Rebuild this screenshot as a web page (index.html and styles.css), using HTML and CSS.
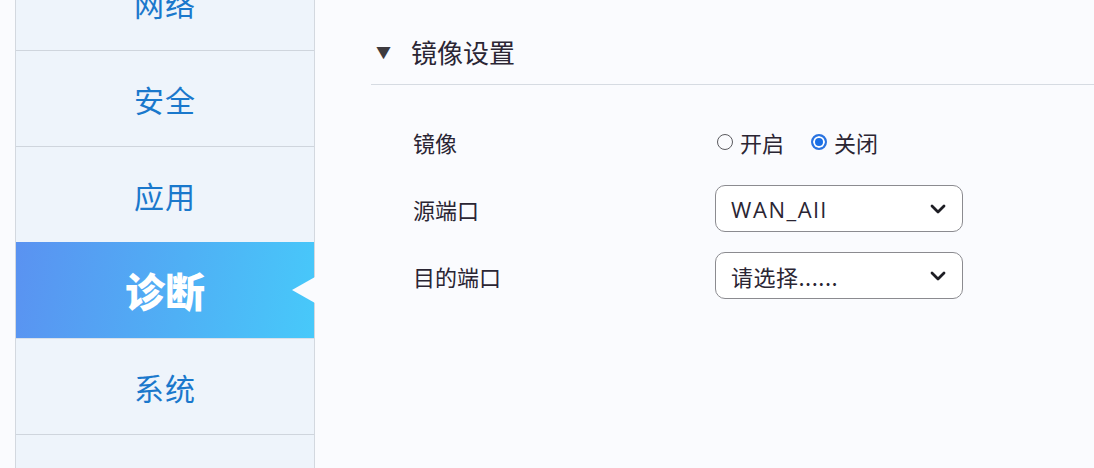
FILE: index.html
```html
<!DOCTYPE html>
<html lang="zh">
<head>
<meta charset="utf-8">
<link rel="stylesheet" href="styles.css">
</head>
<body>
<div class="page">
  <nav class="sidebar">
    <div class="nav-item first">网络</div>
    <div class="nav-item">安全</div>
    <div class="nav-item">应用</div>
    <div class="nav-item active">诊断<span class="pointer"></span></div>
    <div class="nav-item">系统</div>
    <div class="nav-item"></div>
  </nav>
  <main class="content">
    <div class="section-head">
      <span class="caret">▼</span>
      <span class="section-title">镜像设置</span>
    </div>
    <div class="form">
      <div class="row">
        <div class="label">镜像</div>
        <div class="control radios">
          <label class="radio"><span class="dot"></span>开启</label>
          <label class="radio checked"><span class="dot"></span>关闭</label>
        </div>
      </div>
      <div class="row">
        <div class="label">源端口</div>
        <div class="control">
          <div class="select"><span class="value latin">WAN_All</span>
            <svg class="chev" viewBox="0 0 16 10" width="16" height="10"><path d="M2 2 L8 8 L14 2" fill="none" stroke="#1e1e24" stroke-width="2.8" stroke-linecap="round" stroke-linejoin="round"/></svg>
          </div>
        </div>
      </div>
      <div class="row">
        <div class="label">目的端口</div>
        <div class="control">
          <div class="select"><span class="value">请选择......</span>
            <svg class="chev" viewBox="0 0 16 10" width="16" height="10"><path d="M2 2 L8 8 L14 2" fill="none" stroke="#1e1e24" stroke-width="2.8" stroke-linecap="round" stroke-linejoin="round"/></svg>
          </div>
        </div>
      </div>
    </div>
  </main>
</div>
</body>
</html>
```
FILE: styles.css
```css
html, body {
  margin: 0;
  padding: 0;
}
body {
  background: #fafbfe;
  font-family: "Noto Sans CJK SC", "Noto Sans", sans-serif;
  color: #2a2533;
  width: 1094px;
  height: 468px;
  overflow: hidden;
}
.page {
  display: flex;
  height: 468px;
  overflow: hidden;
}
.sidebar {
  margin-left: 15px;
  width: 298px;
  border-left: 1px solid #d3d8df;
  border-right: 1px solid #d3d8df;
  background: #eef4fb;
  display: flex;
  flex-direction: column;
  flex-shrink: 0;
}
.nav-item {
  position: relative;
  height: 95px;
  flex-shrink: 0;
  border-bottom: 1px solid #cfd5dd;
  display: flex;
  align-items: center;
  justify-content: center;
  font-size: 30px;
  color: #1a78cc;
  letter-spacing: 1px;
}
.nav-item.first {
  margin-top: -45px;
}
.nav-item.active {
  background: linear-gradient(100deg, #5a92f1 0%, #4fb0f5 55%, #47c9fa 100%);
  color: #ffffff;
  font-weight: 900;
  font-size: 40px;
  letter-spacing: 0;
  border-bottom-color: #d8e0ea;
  margin-top: -1px;
  height: 96px;
}
.pointer {
  position: absolute;
  right: -1px;
  top: 50%;
  margin-top: -13px;
  width: 0;
  height: 0;
  border-top: 13px solid transparent;
  border-bottom: 13px solid transparent;
  border-right: 23px solid #fafbfe;
}
.content {
  flex: 1;
  margin-left: 56px;
  display: flex;
  flex-direction: column;
}
.section-head {
  height: 85px;
  box-sizing: border-box;
  padding-top: 30px;
  padding-left: 5px;
  display: flex;
  align-items: flex-start;
  border-bottom: 1px solid #d6dbe2;
}
.caret {
  font-size: 15px;
  color: #3d3a3e;
  width: 35px;
  line-height: 44px;
}
.section-title {
  font-size: 26px;
  line-height: 44px;
  color: #2b2634;
}
.form {
  padding-top: 24px;
  display: flex;
  flex-direction: column;
}
.row {
  display: flex;
  align-items: center;
  height: 66px;
}
.row + .row {
  height: 67px;
}
.label {
  width: 344px;
  padding-left: 42px;
  box-sizing: border-box;
  font-size: 22px;
  color: #2a2533;
}
.control {
  display: flex;
  align-items: center;
}
.radios {
  gap: 27px;
  padding-left: 2px;
}
.radio {
  display: flex;
  align-items: center;
  gap: 7px;
  font-size: 22px;
}
.dot {
  width: 14px;
  height: 14px;
  border: 1px solid #5a5a5f;
  border-radius: 50%;
  box-sizing: content-box;
}
.radio.checked .dot {
  border: 2px solid #2a73e0;
  width: 12px;
  height: 12px;
  background: #1a6fe6;
  box-shadow: inset 0 0 0 2px #ffffff;
}
.select {
  display: flex;
  align-items: center;
  justify-content: space-between;
  padding: 0 16px 0 15px;
  box-sizing: border-box;
  width: 248px;
  height: 47px;
  border: 1px solid #8b8b90;
  border-radius: 10px;
  background: #ffffff;
}
.value {
  font-size: 22px;
  color: #2a2533;
  letter-spacing: 0.5px;
}
.value.latin {
  font-family: "Open Sans", "Noto Sans", sans-serif;
  font-size: 22px;
  letter-spacing: 1.6px;
}
.chev {
  display: block;
}
```
